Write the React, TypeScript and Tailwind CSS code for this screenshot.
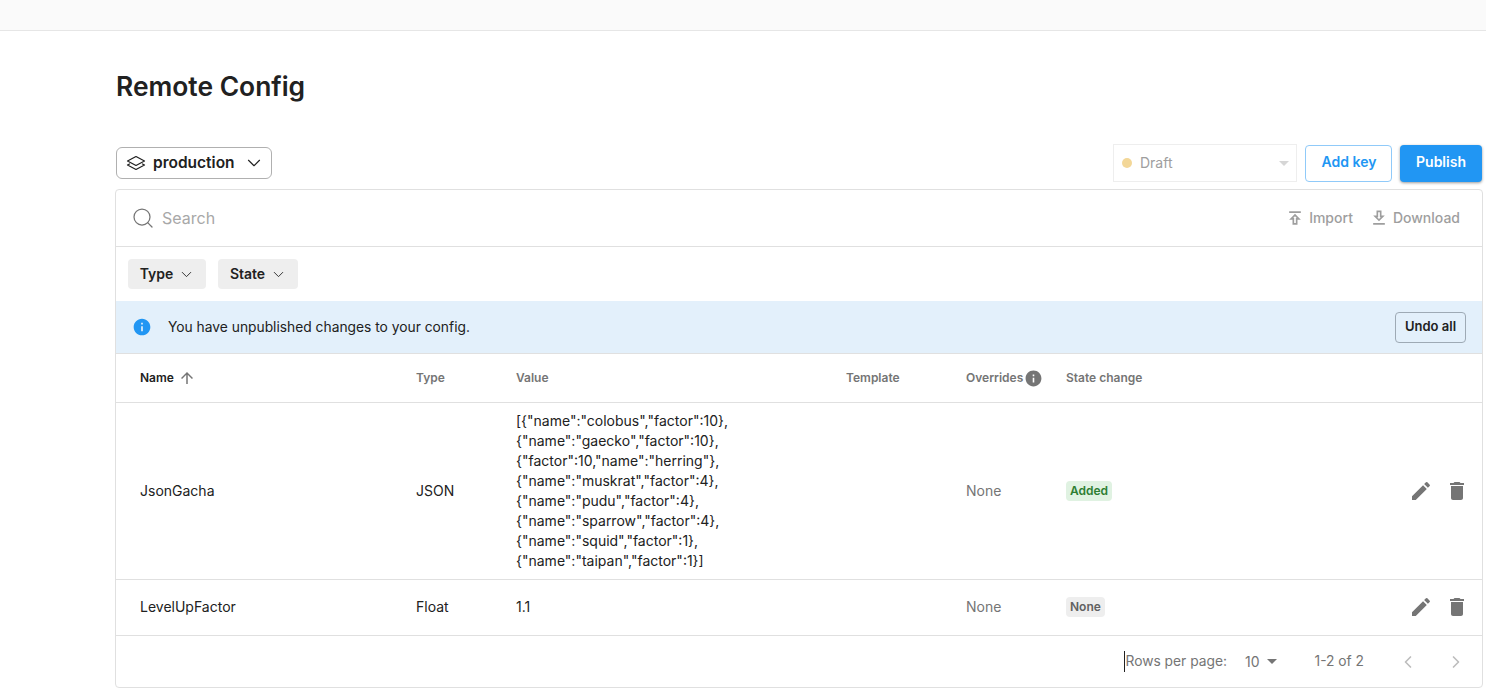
import { ChevronDown, ChevronLeft, ChevronRight, Search } from 'lucide-react'

const COLS = 'grid grid-cols-[276px_100px_330px_120px_100px_1fr] items-center pl-6'

const EDIT = 'M3 17.25V21h3.75L17.81 9.94l-3.75-3.75L3 17.25zM20.71 7.04c.39-.39.39-1.02 0-1.41l-2.34-2.34a.9959.9959 0 0 0-1.41 0l-1.83 1.83 3.75 3.75 1.83-1.83z'
const TRASH = 'M6 19c0 1.1.9 2 2 2h8c1.1 0 2-.9 2-2V7H6v12zM19 4h-3.5l-1-1h-5l-1 1H5v2h14V4z'
const INFO = 'M12 2C6.48 2 2 6.48 2 12s4.48 10 10 10 10-4.48 10-10S17.52 2 12 2zm1 15h-2v-6h2v6zm0-8h-2V7h2v2z'
const ARROW_UP = 'M4 12l1.41 1.41L11 7.83V20h2V7.83l5.58 5.59L20 12l-8-8-8 8z'
const IMPORT = 'M5 4h14v2H5zm0 10h4v6h6v-6h4l-7-7-7 7zm8-2v6h-2v-6H9.83L12 9.83 14.17 12H13z'
const DOWNLOAD = 'M19 9h-4V3H9v6H5l7 7 7-7zM11 11V5h2v6h1.17L12 13.17 9.83 11H11zm-6 7h14v2H5z'

const JSON_LINES = [
  '[{"name":"colobus","factor":10},',
  '{"name":"gaecko","factor":10},',
  '{"factor":10,"name":"herring"},',
  '{"name":"muskrat","factor":4},',
  '{"name":"pudu","factor":4},',
  '{"name":"sparrow","factor":4},',
  '{"name":"squid","factor":1},',
  '{"name":"taipan","factor":1}]',
]

function Icon({ d, className }: { d: string; className?: string }) {
  return (
    <svg viewBox="0 0 24 24" fill="currentColor" className={className}>
      <path d={d} />
    </svg>
  )
}

// flat stacked layers, the lucide one is too tall for this
function LayersIcon() {
  return (
    <svg viewBox="0 0 20 16" width="20" height="16" fill="none" stroke="currentColor" strokeWidth="1.2" strokeLinejoin="round" strokeLinecap="round">
      <path d="M10 1.5 18.5 6 10 10.5 1.5 6z" />
      <path d="M3.5 9 1.5 10 10 14.5 18.5 10 16.5 9" />
    </svg>
  )
}

function FilterChip({ label, width }: { label: string; width: string }) {
  return (
    <button className={`flex h-[30px] items-center justify-center gap-[5px] rounded bg-[#eeeeee] pl-px text-sm font-semibold text-[#212121] ${width}`}>
      {label}
      <ChevronDown size={17} strokeWidth={1.25} />
    </button>
  )
}

function RowActions() {
  return (
    <div className="flex items-center justify-end gap-[12px] pr-[13px] text-[#757575]">
      <Icon d={EDIT} className="size-6" />
      <Icon d={TRASH} className="size-6" />
    </div>
  )
}

export default function App() {
  return (
    <div className="h-[700px] overflow-hidden bg-white font-['Inter',sans-serif] text-[#212121]">
      <div className="h-[31px] border-b border-[#e6e6e6] bg-[#fafafa]" />
      <div className="ml-[115px] mr-[3px]">
        <h1 className="mt-[37px] h-[36px] pl-px text-[26.4px] leading-[36px] font-semibold text-[#212121]">Remote Config</h1>

        <div className="mt-[40px] flex h-[45px] items-start justify-between">
          <button className="mt-[3px] ml-px flex h-8 w-[156px] items-center rounded-md border border-[#b0b0b0] pl-[9px] text-[15.5px] font-semibold">
            <LayersIcon />
            <span className="ml-[7px]">production</span>
            <ChevronDown size={22} strokeWidth={1.25} className="ml-[8px]" />
          </button>
          <div className="flex items-center">
            <div className="flex h-[38px] w-[184px] items-center border border-[#eeeeee] pl-[8px] text-sm text-[#9e9e9e]">
              <span className="size-2.5 rounded-full bg-[#f3d798]" />
              <span className="ml-2">Draft</span>
              <span className="mr-[7px] ml-auto h-0 w-0 border-x-[5px] border-t-[5px] border-x-transparent border-t-[#d6d6d6]" />
            </div>
            <button className="ml-2 h-[37px] w-[87px] rounded border border-[#90caf9] pb-[2px] pl-px text-sm font-semibold text-[#2196f3]">Add key</button>
            <button className="mr-px ml-2 h-[37px] w-[82px] rounded bg-[#2196f3] pb-[2px] text-sm font-semibold text-white shadow-[0_1px_3px_rgba(0,0,0,0.4)]">Publish</button>
          </div>
        </div>

        <div className="rounded border border-[#e0e0e0]">
          <div className="flex h-[57px] items-center border-b border-[#e0e0e0] pr-[22px] pl-[15px]">
            <Search size={24} strokeWidth={1.25} className="text-[#757575]" />
            <span className="ml-[7px] text-base text-[#a8a8a8]">Search</span>
            <div className="ml-auto flex items-center gap-4 text-sm font-medium text-[#9e9e9e]">
              <span className="flex items-center gap-1"><Icon d={IMPORT} className="size-5" />Import</span>
              <span className="flex items-center gap-1"><Icon d={DOWNLOAD} className="size-5" />Download</span>
            </div>
          </div>

          <div className="flex h-[54px] items-center gap-3 pl-3">
            <FilterChip label="Type" width="w-[78px]" />
            <FilterChip label="State" width="w-[80px]" />
          </div>

          <div className="flex h-[53px] items-center border-b border-[#e0e0e0] bg-[#e3f0fb] pr-4 pl-[16px]">
            <Icon d={INFO} className="size-5 text-[#2196f3]" />
            <span className="ml-[16px] text-[13.8px] text-[#212121]">You have unpublished changes to your config.</span>
            <button className="ml-auto h-[31px] w-[71px] rounded border border-[#9eaab5] text-[13px] font-semibold">Undo all</button>
          </div>

          <div className={`${COLS} h-[49px] border-b border-[#e0e0e0] text-xs font-semibold text-[#757575]`}>
            <span className="flex items-center gap-1 text-[#212121]">Name<Icon d={ARROW_UP} className="size-[18px] text-[#757575]" /></span>
            <span>Type</span>
            <span>Value</span>
            <span>Template</span>
            <span className="flex items-center gap-px">Overrides<Icon d={INFO} className="size-[19px] text-[#757575]" /></span>
            <span>State change</span>
          </div>

          <div className={`${COLS} h-[177px] border-b border-[#e0e0e0] text-sm`}>
            <span>JsonGacha</span>
            <span>JSON</span>
            <div className="leading-5">
              {JSON_LINES.map((line) => (
                <div key={line}>{line}</div>
              ))}
            </div>
            <span />
            <span className="text-[#757575]">None</span>
            <div className="flex items-center justify-between">
              <span className="rounded-sm bg-[#e0f2e2] px-1 py-[2px] text-xs font-semibold text-[#2e7d32]">Added</span>
              <RowActions />
            </div>
          </div>

          <div className={`${COLS} h-[56px] border-b border-[#e0e0e0] pb-[2px] text-sm`}>
            <span>LevelUpFactor</span>
            <span>Float</span>
            <span>1.1</span>
            <span />
            <span className="text-[#757575]">None</span>
            <div className="flex items-center justify-between">
              <span className="rounded-sm bg-[#eeeeee] px-1 py-[2px] text-xs font-semibold text-[#616161]">None</span>
              <RowActions />
            </div>
          </div>

          <div className="flex h-[51px] items-center justify-end pr-[16px] text-[13.8px] text-[#757575]">
            <span className="border-l border-[#212121]">Rows per page:</span>
            <span className="ml-[18px] text-sm">10</span>
            <span className="ml-[7px] h-0 w-0 border-x-[5px] border-t-[5px] border-x-transparent border-t-[#757575]" />
            <span className="ml-[38px]">1-2 of 2</span>
            <ChevronLeft size={20} strokeWidth={2} className="ml-[34px] text-[#bdbdbd]" />
            <ChevronRight size={20} strokeWidth={2} className="ml-[28px] text-[#bdbdbd]" />
          </div>
        </div>
      </div>
    </div>
  )
}
